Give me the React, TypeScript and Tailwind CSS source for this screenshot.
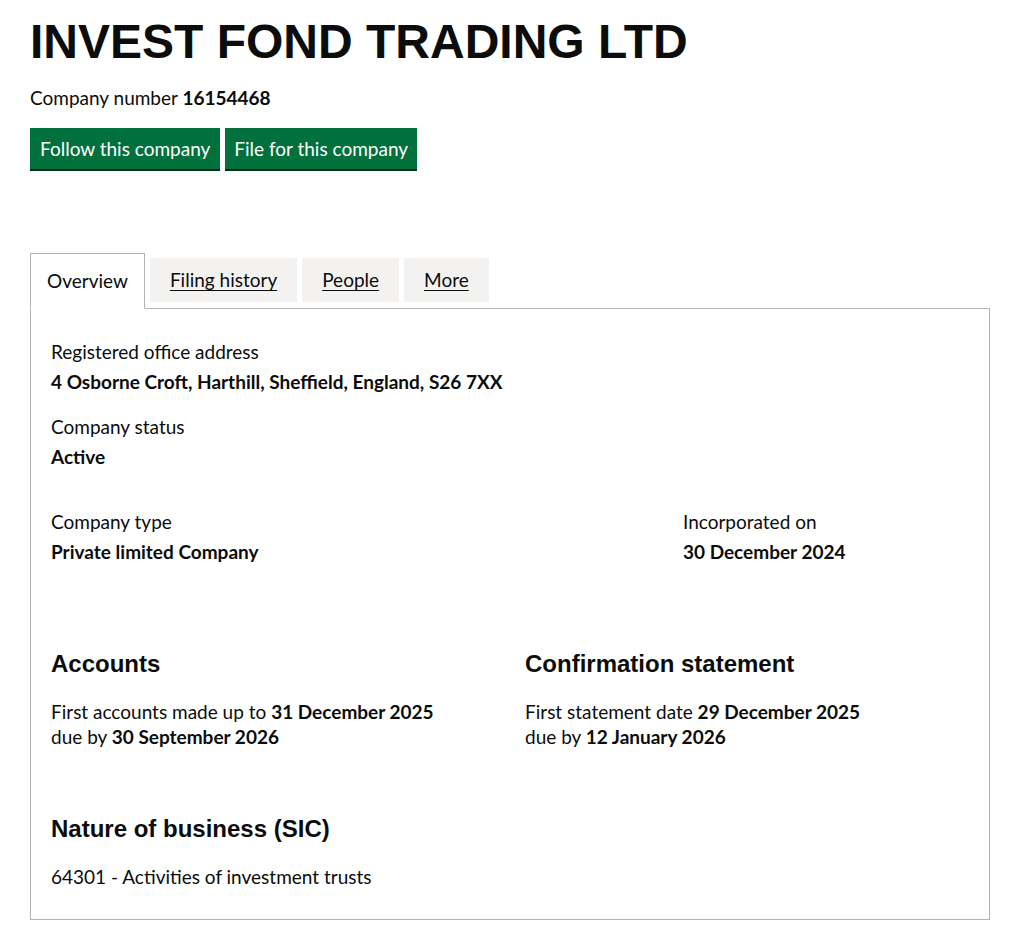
import React from 'react';

const body = "font-['Lato',sans-serif]";
const head = "font-['Liberation_Sans',Arial,sans-serif]";

const Tab: React.FC<{ label: string; active?: boolean }> = ({ label, active }) =>
  active ? (
    <li className="mr-[5px] -mb-px">
      <span className="block h-[56px] bg-white border border-[#b1b4b6] border-b-white px-[16px] pt-[14px] text-[19px] leading-[25px] text-[#0b0c0c]">
        {label}
      </span>
    </li>
  ) : (
    <li className="mr-[5px] mt-[5px]">
      <a href="#" className="block h-[44px] bg-[#f3f2f1] px-[20px] pt-[9px] text-[19px] leading-[25px] text-[#0b0c0c] underline underline-offset-[3px] decoration-1">
        {label}
      </a>
    </li>
  );

const Field: React.FC<{ label: string; value: string; className?: string }> = ({ label, value, className }) => (
  <div className={className}>
    <p className="text-[19px] leading-[25px] mb-[5px]">{label}</p>
    <p className="text-[19px] leading-[25px] font-bold">{value}</p>
  </div>
);

export default function App() {
  return (
    <div className={`${body} bg-white text-[#0b0c0c] min-h-[935px] px-[30px] pt-[17px]`}>
      <h1 className={`${head} text-[48px] leading-[50px] font-bold mb-[18px]`}>INVEST FOND TRADING LTD</h1>
      <p className="text-[19px] leading-[25px] mb-[18px]">
        Company number <strong className="font-bold">16154468</strong>
      </p>
      <div className="flex gap-[5px]">
        <button className="bg-[#00703c] text-white text-[19px] leading-[19px] px-[10px] pt-[11px] pb-[11px] shadow-[0_2px_0_#002d18]">Follow this company</button>
        <button className="bg-[#00703c] text-white text-[19px] leading-[19px] px-[9px] pt-[11px] pb-[11px] shadow-[0_2px_0_#002d18]">File for this company</button>
      </div>

      <div className="mt-[84px] w-[960px]">
        <ul className="flex relative z-10">
          <Tab label="Overview" active />
          <Tab label="Filing history" />
          <Tab label="People" />
          <Tab label="More" />
        </ul>
        <div className="border border-[#b1b4b6] px-[20px] pt-[30px] pb-[30px]">
          <Field label="Registered office address" value="4 Osborne Croft, Harthill, Sheffield, England, S26 7XX" className="mb-[20px]" />
          <Field label="Company status" value="Active" className="mb-[40px]" />
          <div className="flex -mx-[15px]">
            <Field label="Company type" value="Private limited Company" className="w-2/3 px-[15px]" />
            <Field label="Incorporated on" value="30 December 2024" className="w-1/3 px-[15px]" />
          </div>

          <div className="flex -mx-[15px] mt-[85px]">
            <div className="w-1/2 px-[15px]">
              <h2 className={`${head} text-[24px] leading-[30px] font-bold mb-[20px]`}>Accounts</h2>
              <p className="text-[19px] leading-[25px]">
                First accounts made up to <strong>31 December 2025</strong>
                <br />
                due by <strong>30 September 2026</strong>
              </p>
            </div>
            <div className="w-1/2 px-[15px]">
              <h2 className={`${head} text-[24px] leading-[30px] font-bold mb-[20px]`}>Confirmation statement</h2>
              <p className="text-[19px] leading-[25px]">
                First statement date <strong>29 December 2025</strong>
                <br />
                due by <strong>12 January 2026</strong>
              </p>
            </div>
          </div>

          <h2 className={`${head} text-[24px] leading-[30px] font-bold mt-[65px] mb-[20px]`}>Nature of business (SIC)</h2>
          <p className="text-[19px] leading-[25px]">64301 - Activities of investment trusts</p>
        </div>
      </div>
    </div>
  );
}
